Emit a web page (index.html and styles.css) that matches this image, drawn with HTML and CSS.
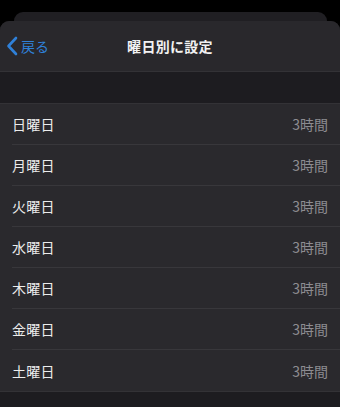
FILE: index.html
```html
<!DOCTYPE html>
<html lang="ja">
<head>
<meta charset="utf-8">
<link rel="stylesheet" href="styles.css">
</head>
<body>
<div class="screen">
  <div class="backcard"></div>
  <div class="sheet">
    <div class="nav">
      <div class="back">
        <svg class="chev" width="12" height="20" viewBox="0 0 12 20"><path d="M10 2 L2.5 10 L10 18" fill="none" stroke="#2f80d8" stroke-width="2.6" stroke-linecap="round" stroke-linejoin="round"/></svg>
        <span>戻る</span>
      </div>
      <div class="title">曜日別に設定</div>
    </div>
    <div class="gap"></div>
    <div class="list">
      <div class="row"><span class="label">日曜日</span><span class="value">3時間</span></div>
      <div class="row"><span class="label">月曜日</span><span class="value">3時間</span></div>
      <div class="row"><span class="label">火曜日</span><span class="value">3時間</span></div>
      <div class="row"><span class="label">水曜日</span><span class="value">3時間</span></div>
      <div class="row"><span class="label">木曜日</span><span class="value">3時間</span></div>
      <div class="row"><span class="label">金曜日</span><span class="value">3時間</span></div>
      <div class="row last"><span class="label">土曜日</span><span class="value">3時間</span></div>
    </div>
    <div class="bottom"></div>
  </div>
</div>
</body>
</html>
```
FILE: styles.css
```css
* { box-sizing: border-box; }
html, body { margin: 0; padding: 0; background: #000; }
body { font-family: "Noto Sans CJK JP", "Noto Sans", sans-serif; width: 340px; height: 407px; overflow: hidden; }
.screen { display: flex; flex-direction: column; height: 407px; padding-top: 12px; }
.backcard { height: 20px; margin: 0 13px 0 14px; background: #201f23; border-radius: 9px 9px 0 0; flex-shrink: 0; }
.sheet { margin-top: -11px; flex: 1; background: #1d1c20; border-radius: 9px 9px 0 0; display: flex; flex-direction: column; overflow: hidden; position: relative; }
.nav { height: 51px; background: #29282c; display: flex; align-items: center; justify-content: center; position: relative; border-bottom: 1px solid #333236; flex-shrink: 0; }
.back { position: absolute; left: 6px; top: 15px; display: flex; align-items: center; color: #2f80d8; font-size: 14px; gap: 3px; }
.back span { line-height: 20px; }
.title { color: #f2f2f2; font-weight: 700; font-size: 14px; letter-spacing: 0.3px; margin-top: 0; }
.gap { height: 31px; flex-shrink: 0; }
.list { background: #2a292d; border-top: 1px solid #333236; }
.row { height: 41px; margin-left: 12px; padding-right: 12px; display: flex; align-items: center; justify-content: space-between; border-bottom: 1px solid #38373b; }
.row.last { border-bottom: none; }
.label { color: #ececec; font-size: 14px; letter-spacing: 0.2px; }
.value { color: #8d8c91; font-size: 14px; }
.bottom { flex: 1; border-top: 1px solid #333236; }
```
